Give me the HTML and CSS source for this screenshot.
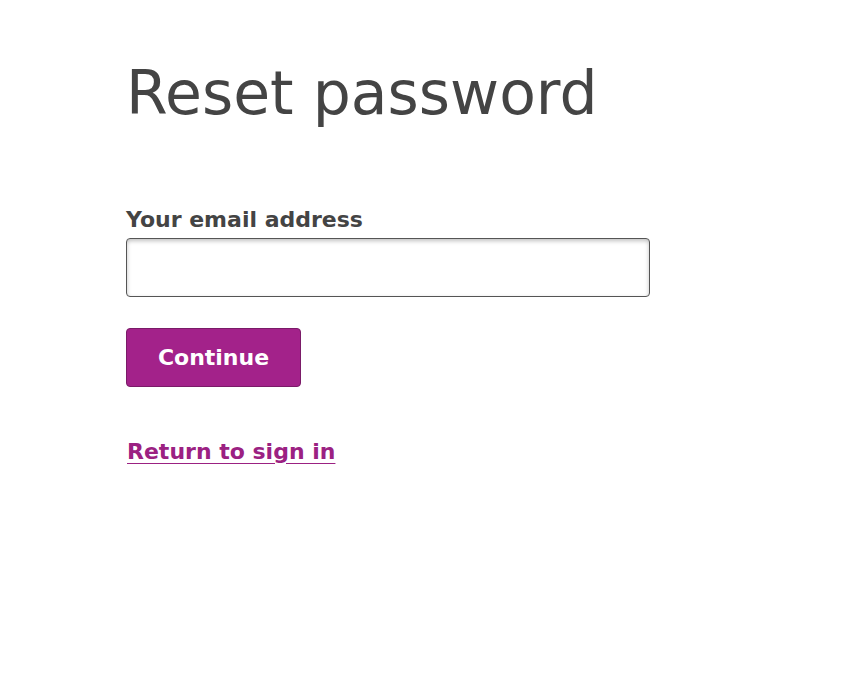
FILE: index.html
```html
<!DOCTYPE html>
<html lang="en">
  <head>
    <meta charset="UTF-8" />
    <meta name="viewport" content="width=device-width, initial-scale=1.0" />
    <title>Reset password</title>
    <link rel="stylesheet" href="styles.css">
  </head>
  <body>
    <main class="page">
      <h1>Reset password</h1>
      <form class="reset-form">
        <label class="field-label" for="email">Your email address</label>
        <input class="field-input" id="email" type="email" />
        <button class="continue-button" type="button">Continue</button>
      </form>
      <a class="back-link" href="#">Return to sign in</a>
    </main>
  </body>
</html>
```

FILE: styles.css
```css
body {
  margin: 0;
  font-family: "DejaVu Sans", sans-serif;
  color: #444;
  background: #fff;
}

.page {
  padding: 57px 0 0 126px;
}

h1 {
  margin: 0;
  font-size: 60px;
  font-weight: 400;
  line-height: 72px;
}

.reset-form {
  margin-top: 77px;
  display: flex;
  flex-direction: column;
  align-items: flex-start;
}

.field-label {
  font-size: 22px;
  font-weight: 600;
  line-height: 28px;
  margin-bottom: 4px;
}

.field-input {
  box-sizing: border-box;
  width: 524px;
  height: 59px;
  border: 1px solid #555;
  border-radius: 4px;
  box-shadow: inset 0 2px 4px rgba(0, 0, 0, 0.25);
  font-size: 20px;
  padding: 0 12px;
}

.continue-button {
  margin-top: 31px;
  box-sizing: border-box;
  width: 175px;
  height: 59px;
  background-color: #a3228a;
  border: 1px solid #7a1b68;
  border-radius: 4px;
  color: #fff;
  font-family: inherit;
  font-size: 22px;
  font-weight: 600;
  cursor: pointer;
}

.back-link {
  display: inline-block;
  margin-top: 52px;
  margin-left: 1px;
  color: #9b2182;
  font-size: 22px;
  font-weight: 600;
  text-underline-offset: 4px;
}
```
